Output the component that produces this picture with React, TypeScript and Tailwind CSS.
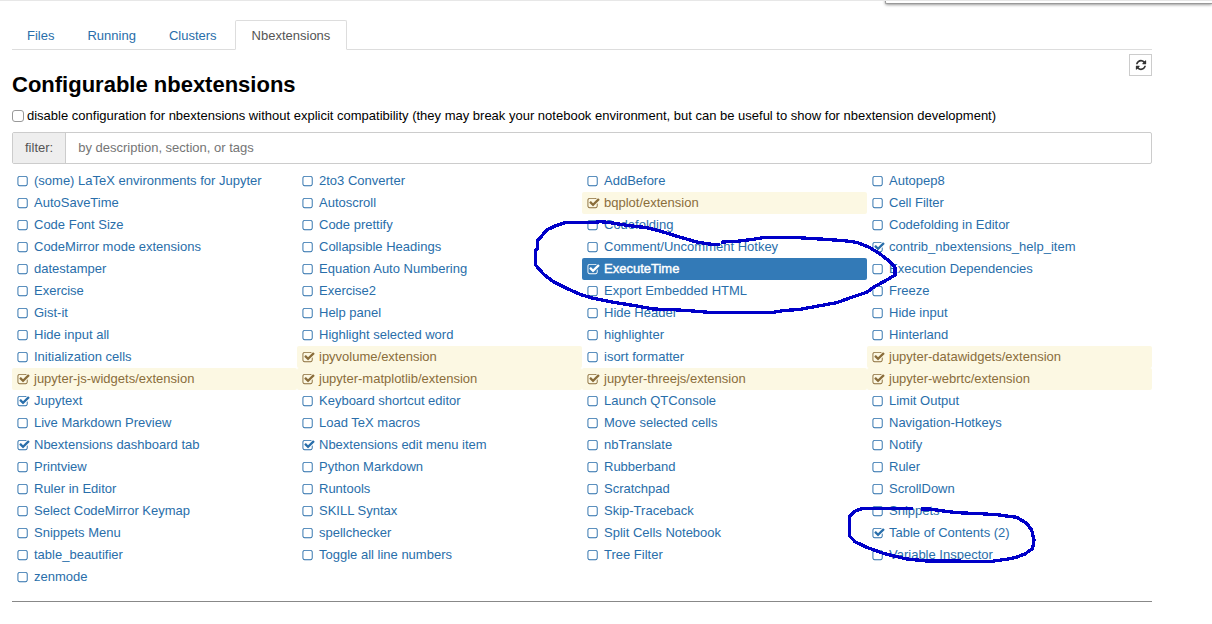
import { useState } from "react";

const SQUARE =
  "M1184 256h-832q-66 0-113 47t-47 113v832q0 66 47 113t113 47h832q66 0 113-47t47-113v-832q0-66-47-113t-113-47zm288 160v832q0 119-84.5 203.5t-203.5 84.5h-832q-119 0-203.5-84.5t-84.5-203.5v-832q0-119 84.5-203.5t203.5-84.5h832q119 0 203.5 84.5t84.5 203.5z";
const CHECK_SQUARE =
  "M1472 930v318q0 119-84.5 203.5t-203.5 84.5h-832q-119 0-203.5-84.5t-84.5-203.5v-832q0-119 84.5-203.5t203.5-84.5h832q63 0 117 25 15 7 18 23 3 17-9 29l-49 49q-10 10-23 10-3 0-9-2-23-6-45-6h-832q-66 0-113 47t-47 113v832q0 66 47 113t113 47h832q66 0 113-47t47-113v-254q0-13 9-22l64-64q10-10 23-10 6 0 12 3 20 8 20 29zm231-489l-814 814q-24 24-57 24t-57-24l-430-430q-24-24-24-57t24-57l110-110q24-24 57-24t57 24l263 263 647-647q24-24 57-24t57 24l110 110q24 24 24 57t-24 57z";
const REFRESH =
  "M1639 1056q0 5-1 7-64 268-268 434.5t-478 166.5q-146 0-282.5-55t-243.5-157l-129 129q-19 19-45 19t-45-19-19-45v-448q0-26 19-45t45-19h448q26 0 45 19t19 45-19 45l-137 137q71 66 161 102t187 36q134 0 250-65t186-179q11-17 53-117 8-23 30-23h192q13 0 22.5 9.5t9.5 22.5zm25-800v448q0 26-19 45t-45 19h-448q-26 0-45-19t-19-45 19-45l138-138q-148-137-349-137-134 0-250 65t-186 179q-11 17-53 117-8 23-30 23h-199q-13 0-22.5-9.5t-9.5-22.5v-7q65-268 270-434.5t480-166.5q146 0 284 55.5t245 156.5l130-129q19-19 45-19t45 19 19 45z";

function Glyph({ d, className }: { d: string; className: string }) {
  return (
    <svg aria-hidden="true" viewBox="0 0 1792 1792" fill="currentColor" className={className}>
      <path d={d} />
    </svg>
  );
}

type Tone = "normal" | "warning" | "selected";
type Extension = { name: string; enabled?: boolean; tone?: Tone };

const on = (name: string): Extension => ({ name, enabled: true });
const warn = (name: string): Extension => ({ name, enabled: true, tone: "warning" });
const off = (...names: string[]): Extension[] => names.map((name) => ({ name }));

const EXTENSIONS: Extension[] = [
  ...off("(some) LaTeX environments for Jupyter", "2to3 Converter", "AddBefore", "Autopep8"),
  ...off("AutoSaveTime", "Autoscroll"),
  warn("bqplot/extension"),
  ...off("Cell Filter"),
  ...off("Code Font Size", "Code prettify", "Codefolding", "Codefolding in Editor"),
  ...off("CodeMirror mode extensions", "Collapsible Headings", "Comment/Uncomment Hotkey"),
  on("contrib_nbextensions_help_item"),
  ...off("datestamper", "Equation Auto Numbering"),
  { name: "ExecuteTime", enabled: true, tone: "selected" },
  ...off("Execution Dependencies"),
  ...off("Exercise", "Exercise2", "Export Embedded HTML", "Freeze"),
  ...off("Gist-it", "Help panel", "Hide Header", "Hide input"),
  ...off("Hide input all", "Highlight selected word", "highlighter", "Hinterland"),
  ...off("Initialization cells"),
  warn("ipyvolume/extension"),
  ...off("isort formatter"),
  warn("jupyter-datawidgets/extension"),
  warn("jupyter-js-widgets/extension"),
  warn("jupyter-matplotlib/extension"),
  warn("jupyter-threejs/extension"),
  warn("jupyter-webrtc/extension"),
  on("Jupytext"),
  ...off("Keyboard shortcut editor", "Launch QTConsole", "Limit Output"),
  ...off("Live Markdown Preview", "Load TeX macros", "Move selected cells", "Navigation-Hotkeys"),
  on("Nbextensions dashboard tab"),
  on("Nbextensions edit menu item"),
  ...off("nbTranslate", "Notify"),
  ...off("Printview", "Python Markdown", "Rubberband", "Ruler"),
  ...off("Ruler in Editor", "Runtools", "Scratchpad", "ScrollDown"),
  ...off("Select CodeMirror Keymap", "SKILL Syntax", "Skip-Traceback", "Snippets"),
  ...off("Snippets Menu", "spellchecker", "Split Cells Notebook"),
  on("Table of Contents (2)"),
  ...off("table_beautifier", "Toggle all line numbers", "Tree Filter", "Variable Inspector"),
  ...off("zenmode"),
];

const TONES: Record<Tone, string> = {
  normal: "text-[#296eaa]",
  warning: "bg-[#fcf8e3] text-[#8a6d3b]",
  selected: "bg-[#337ab7] text-white [-webkit-text-stroke:0.4px_white]",
};

function ExtensionItem({ name, enabled = false, tone = "normal" }: Extension) {
  const [checked, setChecked] = useState(enabled);
  return (
    <li>
      <label className={`relative flex h-[22px] items-center gap-1 rounded-xs pl-[5px] ${TONES[tone]}`}>
        <input
          type="checkbox"
          checked={checked}
          onChange={() => setChecked(!checked)}
          className="sr-only"
        />
        <Glyph d={checked ? CHECK_SQUARE : SQUARE} className="size-[13px] shrink-0" />
        <span className="whitespace-nowrap">{name}</span>
      </label>
    </li>
  );
}

const TABS = ["Files", "Running", "Clusters", "Nbextensions"];

function Tabs() {
  return (
    <nav className="flex gap-[3px] border-b border-[#ddd]">
      {TABS.map((tab) => (
        <a
          key={tab}
          href={`#${tab.toLowerCase()}`}
          className={
            tab === "Nbextensions"
              ? "-mb-px rounded-t-xs border border-[#ddd] border-b-white bg-white px-4 pt-1.5 pb-1 text-[#555]"
              : "-mb-px border border-transparent px-3.5 pt-1.5 pb-1 text-[#296eaa]"
          }
        >
          {tab}
        </a>
      ))}
    </nav>
  );
}

const EXECUTE_TIME_MARK =
  "607,193 607,186 650,184 700,178 730,173 835,173 915,178 970,182 1010,187 1050,203 1080,222 1110,245 1125,262 1125,285 1100,300 1060,322 1040,337 1000,350 950,368 900,377 840,388 790,392 760,397 700,397 565,397 520,393 460,389 400,387 350,378 270,365 220,355 180,343 140,325 100,305 70,282 47,255 47,210 52,205 52,182 62,172 80,150 105,138 135,128 215,128 240,125 265,127 320,136 380,143 420,153 475,170 530,186 575,193 600,193";
const CONTENTS_MARK =
  "273,87 300,87 340,93 380,98 450,101 500,104 560,112 590,130 605,150 612,180 608,205 585,222 555,233 535,237 485,244 290,243 230,237 160,220 110,202 75,185 59,168 59,110 72,95 95,86 250,86";

function PenMark({ points, viewBox, className }: { points: string; viewBox: string; className: string }) {
  return (
    <svg aria-hidden="true" viewBox={viewBox} className={`pointer-events-none absolute ${className}`}>
      <polyline
        points={points}
        fill="none"
        stroke="#0000c8"
        strokeWidth="10"
        strokeLinejoin="round"
        shapeRendering="crispEdges"
      />
    </svg>
  );
}

export default function App() {
  return (
    <div className="relative overflow-hidden border-t border-[#e7e7e7] bg-white font-['Liberation_Sans',Arial,sans-serif] text-[13px] leading-[18px] text-black">
      <div className="absolute -top-1 right-0 left-[885px] h-[7px] rounded-bl-xs border-b border-l border-[#999] bg-white shadow-[0_1px_3px_rgba(0,0,0,0.4)]" />
      <main className="pt-[19px] pr-[60px] pb-6 pl-3">
        <Tabs />
        <div className="flex items-start justify-between pt-1">
          <h1 className="pt-[17px] pb-px text-[22px] leading-7 font-bold">Configurable nbextensions</h1>
          <button
            type="button"
            aria-label="Refresh"
            className="flex h-[22px] w-[23px] items-center justify-center border border-[#ccc] bg-white text-[#333]"
          >
            <Glyph d={REFRESH} className="size-3" />
          </button>
        </div>
        <label className="mt-[7px] flex items-center gap-[3px]">
          <input
            type="checkbox"
            className="size-3 shrink-0 appearance-none rounded-[3px] border border-[#999] bg-white checked:bg-[#337ab7]"
          />
          <span>disable configuration for nbextensions without explicit compatibility (they may break your notebook environment, but can be useful to show for nbextension development)</span>
        </label>
        <div className="mt-[7px] flex h-8 rounded-xs border border-[#ccc]">
          <label htmlFor="filter" className="flex items-center border-r border-[#ccc] bg-[#eee] px-3 pb-px text-[#555]">
            filter:
          </label>
          <input
            id="filter"
            type="text"
            placeholder="by description, section, or tags"
            className="min-w-0 grow px-3 pb-px outline-none placeholder:text-[#757575]"
          />
        </div>
        <ul className="mt-1.5 grid grid-cols-4">
          {EXTENSIONS.map((extension) => (
            <ExtensionItem key={extension.name} {...extension} />
          ))}
        </ul>
        <hr className="mt-[13px] border-[#888]" />
      </main>
      <PenMark points={EXECUTE_TIME_MARK} viewBox="0 0 1200 450" className="top-[179px] left-[520px] h-[150px] w-[400px]" />
      <PenMark points={CONTENTS_MARK} viewBox="0 0 660 300" className="top-[479px] left-[830px] h-[100px] w-[220px]" />
    </div>
  );
}
